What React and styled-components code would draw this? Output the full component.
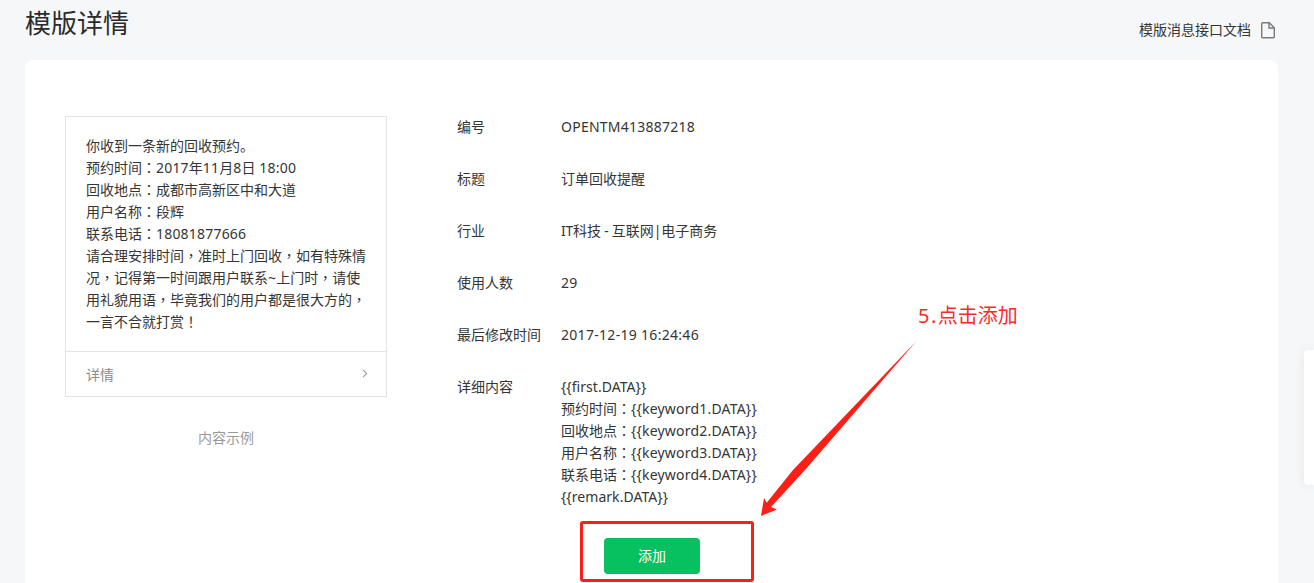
import React from "react";
import styled, { createGlobalStyle } from "styled-components";

const GlobalStyle = createGlobalStyle`
  html, body {
    margin: 0;
    padding: 0;
    height: 100%;
    overflow: hidden;
    background: #f6f7f9;
    font-family: "Noto Sans", "Noto Sans CJK SC", sans-serif;
    color: #353535;
  }
`;

const Page = styled.div`
  position: relative;
  width: 1314px;
  height: 583px;
  overflow: hidden;
  padding: 0 36px 0 25px;
  box-sizing: border-box;
`;

const Header = styled.div`
  display: flex;
  justify-content: space-between;
  height: 60px;
`;

const Title = styled.h2`
  margin: 5px 0 0;
  font-size: 26px;
  line-height: 36px;
  font-weight: 400;
  color: #2b2b2b;
`;

const DocLink = styled.a`
  display: flex;
  align-items: center;
  gap: 10px;
  height: 20px;
  margin: 20px 3px 0 0;
  font-size: 14px;
  line-height: 20px;
  color: #353535;
`;

const Card = styled.div`
  display: flex;
  height: 560px;
  padding: 56px 40px 0;
  background: #fff;
  border-radius: 8px;
  box-sizing: border-box;
`;

const PreviewColumn = styled.div`
  width: 322px;
  flex-shrink: 0;
`;

const Preview = styled.div`
  border: 1px solid #e4e4e4;
  box-sizing: border-box;
  height: 281px;
  display: flex;
  flex-direction: column;
`;

const PreviewBody = styled.div`
  flex: 1;
  padding: 18px 20px 0;
  font-size: 14px;
  line-height: 22px;
  white-space: nowrap;
`;

const TextLine = styled.div`
  height: 22px;
`;

const PreviewFooter = styled.div`
  display: flex;
  align-items: center;
  justify-content: space-between;
  height: 45px;
  padding: 0 18px 1px 20px;
  border-top: 1px solid #e4e4e4;
  box-sizing: border-box;
  font-size: 14px;
  color: #8c8c8c;
`;

const Caption = styled.div`
  margin-top: 31px;
  text-align: center;
  font-size: 14px;
  line-height: 20px;
  color: #9a9a9a;
`;

const Details = styled.div`
  margin: 0 0 0 70px;
  display: flex;
  flex-direction: column;
  align-items: flex-start;
`;

const Row = styled.div`
  display: flex;
  min-height: 22px;
  margin-bottom: 30px;
  font-size: 14px;
  line-height: 22px;
`;

const Label = styled.div`
  width: 104px;
`;

const ContentRow = styled(Row)`
  margin-bottom: 0;
`;

const AddRow = styled.div`
  width: 390px;
  display: flex;
  justify-content: center;
  margin-top: 30px;
`;

const AddButton = styled.button`
  width: 96px;
  height: 36px;
  padding: 0 0 2px;
  border: 0;
  border-radius: 4px;
  background: #07c160;
  color: #fff;
  font: inherit;
  font-size: 14px;
`;

const Highlight = styled.div`
  position: absolute;
  left: 580px;
  top: 521px;
  width: 174px;
  height: 61px;
  border: 3px solid #fb1f17;
  border-radius: 3px;
  box-sizing: border-box;
`;

const Annotation = styled.div`
  position: absolute;
  left: 918px;
  top: 301px;
  font-size: 20px;
  line-height: 30px;
  color: #fb2a2a;
`;

const Arrow = styled.svg`
  position: absolute;
  left: 755px;
  top: 335px;
`;

const SideTab = styled.div`
  position: absolute;
  right: 0;
  top: 350px;
  width: 10px;
  height: 135px;
  background: #fff;
  border-radius: 4px 0 0 4px;
  box-shadow: 0 0 12px rgba(0, 0, 0, 0.07);
`;

const Latin = styled.span`
  letter-spacing: ${(p) => p.$spacing}px;
`;

// traditional cut of the font keeps these marks centred in their cell
const Punct = styled.span`
  font-family: "Noto Sans CJK TC", sans-serif;
  line-height: 0;
`;

const rows = [
  { label: "编号", value: "OPENTM413887218" },
  { label: "标题", value: "订单回收提醒" },
  { label: "行业", value: "IT科技 - 互联网|电子商务", spacing: -0.3 },
  { label: "使用人数", value: "29" },
  { label: "最后修改时间", value: "2017-12-19 16:24:46", spacing: 0.3 },
];

const sample = [
  "你收到一条新的回收预约。",
  "预约时间：2017年11月8日 18:00",
  "回收地点：成都市高新区中和大道",
  "用户名称：段辉",
  "联系电话：18081877666",
  "请合理安排时间，准时上门回收，如有特殊情",
  "况，记得第一时间跟用户联系~上门时，请使",
  "用礼貌用语，毕竟我们的用户都是很大方的，",
  "一言不合就打赏！",
];

const content = [
  "{{first.DATA}}",
  "预约时间：{{keyword1.DATA}}",
  "回收地点：{{keyword2.DATA}}",
  "用户名称：{{keyword3.DATA}}",
  "联系电话：{{keyword4.DATA}}",
  "{{remark.DATA}}",
];

function Mixed({ text, spacing = 0.25 }) {
  return text.split(/([\x20-\x7e]+|[，：！])/).map((part, i) => {
    if (!part) return null;
    if (/^[，：！]$/.test(part)) return <Punct key={i}>{part}</Punct>;
    if (/^[\x20-\x7e]+$/.test(part)) {
      return (
        <Latin key={i} $spacing={spacing}>
          {part}
        </Latin>
      );
    }
    return part;
  });
}

function FileIcon() {
  return (
    <svg width="14" height="17" viewBox="0 0 14 17" fill="none" stroke="#7a7a7a" strokeWidth="1.4">
      <path d="M1.7 .8h6.6l5 5v9a1 1 0 0 1-1 1H1.700a1 1 0 0 1-1-1V1.800a1 1 0 0 1 1-1z" />
      <path d="M8 1v5h5" />
    </svg>
  );
}

function Chevron() {
  return (
    <svg width="6" height="9" viewBox="0 0 6 9" fill="none" stroke="#9a9a9a" strokeWidth="1.100">
      <path d="M1 .8l3.700 3.700L1 8.200" />
    </svg>
  );
}

export default function App() {
  return (
    <Page>
      <GlobalStyle />
      <Header>
        <Title>模版详情</Title>
        <DocLink>
          模版消息接口文档
          <FileIcon />
        </DocLink>
      </Header>
      <Card>
        <PreviewColumn>
          <Preview>
            <PreviewBody>
              {sample.map((line) => (
                <TextLine key={line}>
                  <Mixed text={line} spacing={0.2} />
                </TextLine>
              ))}
            </PreviewBody>
            <PreviewFooter>
              详情
              <Chevron />
            </PreviewFooter>
          </Preview>
          <Caption>内容示例</Caption>
        </PreviewColumn>
        <Details>
          {rows.map(({ label, value, spacing }) => (
            <Row key={label}>
              <Label>{label}</Label>
              <div>
                <Mixed text={value} spacing={spacing} />
              </div>
            </Row>
          ))}
          <ContentRow>
            <Label>详细内容</Label>
            <div>
              {content.map((line) => (
                <TextLine key={line}>
                  <Mixed text={line} spacing={line.startsWith("{{") ? 0.05 : 0.2} />
                </TextLine>
              ))}
            </div>
          </ContentRow>
          <AddRow>
            <AddButton>添加</AddButton>
          </AddRow>
        </Details>
      </Card>
      <Highlight />
      <Annotation>
        <Mixed text="5.点击添加" spacing={1.5} />
      </Annotation>
      <Arrow width="170" height="190" viewBox="755 335 170 190">
        <path
          d="M916.500 341L805 470 771 507l6 2.500L761 516l3-18 2.700 4.700L793 470z"
          fill="#fb1f17"
        />
      </Arrow>
      <SideTab />
    </Page>
  );
}
